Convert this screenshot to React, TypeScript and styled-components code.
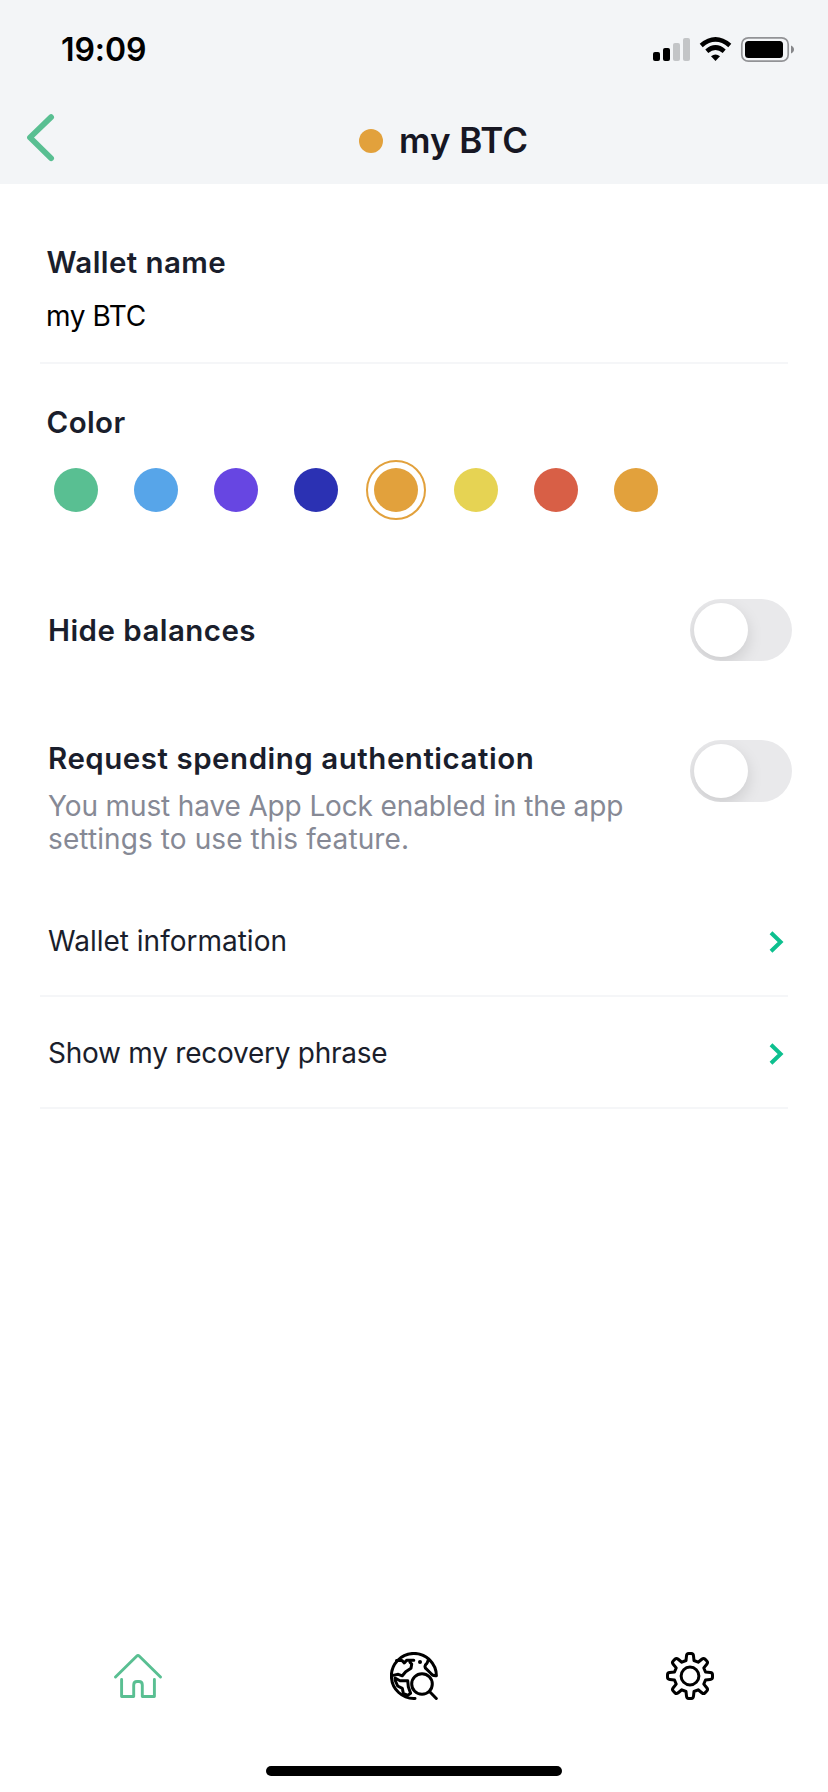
import React, { useState } from "react";
import styled, { createGlobalStyle } from "styled-components";

const GlobalStyle = createGlobalStyle`
  * { box-sizing: border-box; }
  body { margin: 0; background: #ffffff; }
  button { border: 0; padding: 0; margin: 0; background: none; font: inherit; color: inherit; }
`;

const Screen = styled.div`
  width: 828px;
  height: 1792px;
  display: flex;
  flex-direction: column;
  overflow: hidden;
  background: #ffffff;
  color: #1a1e2c;
  font-family: Inter, "Liberation Sans", sans-serif;
`;

const Header = styled.header`
  height: 184px;
  background: #f3f5f7;
`;

const StatusBar = styled.div`
  height: 100px;
  padding: 0 33px 0 61px;
  display: flex;
  align-items: center;
  justify-content: space-between;
`;

const Clock = styled.span`
  font-size: 32px;
  line-height: 40px;
  font-weight: 600;
  letter-spacing: -0.1px;
  color: #000000;
`;

const NavBar = styled.div`
  height: 84px;
  padding: 0 27px;
  display: grid;
  grid-template-columns: 60px 1fr 0;
  align-items: start;
`;

const BackButton = styled.button`
  width: 28px;
  height: 48px;
  margin-top: 14px;
  display: flex;
`;

const Title = styled.h1`
  margin: 20px 0 0;
  padding-left: 272px;
  display: flex;
  align-items: center;
  gap: 16px;
  font-size: 35px;
  line-height: 40px;
  font-weight: 560;
  letter-spacing: -0.05px;
  color: #171723;
`;

const TitleDot = styled.span`
  width: 24px;
  height: 24px;
  margin-top: 2px;
  border-radius: 50%;
  background: #e2a13c;
`;

const Content = styled.main`
  flex: 1;
  padding: 59px 36px 0 40px;
  display: flex;
  flex-direction: column;
`;

const Field = styled.section`
  height: 121px;
  margin-right: 4px;
  padding-left: 6.5px;
  border-bottom: 2px solid #f5f6f8;
`;

const Label = styled.h2<{ $spacing?: number }>`
  margin: 0;
  padding-bottom: 2px;
  font-size: 29.5px;
  line-height: 38px;
  font-weight: 590;
  letter-spacing: ${(p) => p.$spacing ?? 0.4}px;
  color: #1a1e2c;
`;

const FieldValue = styled.div`
  margin-top: 13px;
  margin-left: -0.5px;
  font-size: 28px;
  line-height: 40px;
  letter-spacing: -0.4px;
  color: #000000;
`;

const ColorSection = styled.section`
  margin-top: 39px;
  padding-left: 6.5px;
`;

const Swatches = styled.div`
  margin: 17px 0 0 -0.5px;
  display: flex;
  gap: 20px;
`;

const Swatch = styled.button<{ $color: string; $selected: boolean }>`
  width: 60px;
  height: 60px;
  border-radius: 50%;
  border: 2px solid ${(p) => (p.$selected ? p.$color : "transparent")};
  display: flex;
  align-items: center;
  justify-content: center;

  &::before {
    content: "";
    width: 44px;
    height: 44px;
    border-radius: 50%;
    background: ${(p) => p.$color};
  }
`;

const SettingRow = styled.section<{ $top: number }>`
  margin-top: ${(p) => p.$top}px;
  padding-left: 8px;
  display: flex;
  justify-content: space-between;
  align-items: flex-start;
`;

const SettingText = styled.div<{ $top: number }>`
  margin-top: ${(p) => p.$top}px;
`;

const Hint = styled.p`
  width: 600px;
  margin: 11px 0 0;
  font-size: 28px;
  line-height: 33px;
  color: #868995;
`;

const HintLine = styled.span<{ $spacing: number }>`
  display: block;
  letter-spacing: ${(p) => p.$spacing}px;
`;

const Track = styled.button<{ $on: boolean }>`
  width: 102px;
  height: 62px;
  padding: 4px;
  border-radius: 31px;
  overflow: hidden;
  display: flex;
  justify-content: ${(p) => (p.$on ? "flex-end" : "flex-start")};
  background: ${(p) => (p.$on ? "#59bf92" : "#e9e9eb")};
`;

const Knob = styled.span`
  width: 54px;
  height: 54px;
  border-radius: 50%;
  background: #ffffff;
  box-shadow: 0 6px 16px rgba(0, 0, 0, 0.13);
`;

const Links = styled.nav`
  margin: 29px 4px 0 0;
`;

const LinkRow = styled.button`
  width: 100%;
  height: 112px;
  padding: 1px 4px 0 8px;
  border-bottom: 2px solid #f5f6f8;
  display: flex;
  align-items: center;
  justify-content: space-between;
`;

const LinkText = styled.span<{ $spacing: number }>`
  font-size: 28px;
  line-height: 40px;
  letter-spacing: ${(p) => p.$spacing}px;
`;

const TabBar = styled.nav`
  height: 140px;
  display: grid;
  grid-template-columns: repeat(3, 276px);
`;

const Tab = styled.button`
  height: 48px;
  display: flex;
  justify-content: center;
`;

const HomeIndicator = styled.div`
  width: 296px;
  height: 10px;
  margin: -26px auto 16px;
  border-radius: 5px;
  background: #000000;
`;

const StatusIcons = () => (
  <svg width="142" height="28" viewBox="653 36 142 28" fill="none">
    <rect x="653" y="52" width="7" height="9" rx="2" fill="#000" />
    <rect x="663" y="48" width="7" height="13" rx="2" fill="#000" />
    <rect x="673" y="43" width="7" height="18" rx="2" fill="#c3c5c7" />
    <rect x="683" y="38" width="7" height="23" rx="2" fill="#c3c5c7" />
    <path d="M701.2 45.4Q715.5 33.2 729.8 45.4" stroke="#000" strokeWidth="4.6" />
    <path d="M706.8 51.2Q715.5 43.8 724.2 51.2" stroke="#000" strokeWidth="4.6" />
    <path d="M711 56.2Q715.5 53 720 56.2L715.5 61Z" fill="#000" />
    <rect x="741.8" y="37.8" width="46.4" height="23.4" rx="6.5" stroke="#929396" strokeWidth="1.7" />
    <rect x="745" y="41" width="38" height="17" rx="3.5" fill="#000" />
    <path d="M791 45.5C795 47 795 52 791 53.5Z" fill="#86878a" />
  </svg>
);

const BackIcon = () => (
  <svg width="28" height="48" viewBox="0 0 28 48" fill="none">
    <path d="M24.1 3.2L3 23.5L24.1 44.2" stroke="#59bf92" strokeWidth="5.8" strokeLinecap="round" strokeLinejoin="round" />
  </svg>
);

const Chevron = styled.svg`
  margin-top: 2px;
`;

const ChevronIcon = () => (
  <Chevron width="15" height="22" viewBox="0 0 15 22" fill="none">
    <path d="M2 1.8L11.6 11L2 20.2" stroke="#0dc08f" strokeWidth="4" />
  </Chevron>
);

const HomeIcon = () => (
  <svg width="48" height="48" viewBox="0 0 48 48" fill="none" stroke="#59bf92" strokeWidth="2.9" strokeLinecap="round" strokeLinejoin="round">
    <path d="M1.5 25L22.6 4.2Q24 2.9 25.4 4.2L46.5 25" />
    <path d="M7.6 27.5V44.5H19.7V33Q19.7 29.5 23 29.5H25Q28.3 29.5 28.3 33V44.5H40.4V27.5" />
  </svg>
);

const ExploreIcon = () => (
  <svg width="48" height="48" viewBox="0 0 48 48" fill="none" stroke="#000" strokeWidth="3" strokeLinecap="round" strokeLinejoin="round">
    <path d="M25 46.4A22.5 22.5 0 1 1 46.4 23.8Q42.5 24.2 40.5 21L35.5 16.2Q34 13.5 37 11.2L38.7 7" />
    <path d="M6.5 8.4H12L14.3 10.9L16.7 8.2H23.8M20 10.4L21.7 12L21 16.3L15.7 19.7L12.3 23.8L8.3 22.3L2 23.6" />
    <path d="M5 26L10 28.7H17.7L18.3 34.7L20.6 41.3L17.7 43.4L13.3 41.3L12.3 36.3L7.7 34L5 28" />
    <circle cx="30" cy="10" r="2" fill="#000" stroke="none" />
    <circle cx="32" cy="32" r="10.3" />
    <path d="M39.5 39.5L46.3 46.5" />
  </svg>
);

const TOOTH: [string, [number, number][]][] = [
  ["L", [[-4, -15.5]]],
  ["L", [[-3.5, -20.2]]],
  ["Q", [[-3.3, -22.5], [-1.3, -22.5]]],
  ["L", [[1.3, -22.5]]],
  ["Q", [[3.3, -22.5], [3.5, -20.2]]],
  ["L", [[4, -15.5]]],
];

const gearPath = Array.from({ length: 8 }, (_, i) => {
  const a = (i * Math.PI) / 4;
  return TOOTH.map(([cmd, pts], j) => {
    const coords = pts
      .map(([x, y]) => {
        const px = 24 + x * Math.cos(a) - y * Math.sin(a);
        const py = 24 + x * Math.sin(a) + y * Math.cos(a);
        return `${px.toFixed(2)} ${py.toFixed(2)}`;
      })
      .join(" ");
    return `${i === 0 && j === 0 ? "M" : cmd}${coords}`;
  }).join("");
}).join("") + "Z";

const SettingsIcon = () => (
  <svg width="48" height="48" viewBox="0 0 48 48" fill="none" stroke="#000" strokeWidth="3" strokeLinejoin="round">
    <path d={gearPath} />
    <circle cx="24" cy="24" r="8.9" />
  </svg>
);

const COLORS = ["#59bf92", "#57a5e9", "#6746e2", "#2b31b3", "#e2a13c", "#e6d353", "#d85f46", "#e2a13c"];

function Toggle({ label }: { label: string }) {
  const [on, setOn] = useState(false);
  return (
    <Track $on={on} role="switch" aria-checked={on} aria-label={label} onClick={() => setOn(!on)}>
      <Knob />
    </Track>
  );
}

export default function App() {
  const [selected, setSelected] = useState(4);
  return (
    <Screen>
      <GlobalStyle />
      <Header>
        <StatusBar>
          <Clock>19:09</Clock>
          <StatusIcons />
        </StatusBar>
        <NavBar>
          <BackButton aria-label="Back"><BackIcon /></BackButton>
          <Title><TitleDot />my BTC</Title>
        </NavBar>
      </Header>
      <Content>
        <Field>
          <Label>Wallet name</Label>
          <FieldValue>my BTC</FieldValue>
        </Field>
        <ColorSection>
          <Label>Color</Label>
          <Swatches>
            {COLORS.map((color, i) => (
              <Swatch key={i} $color={color} $selected={i === selected} aria-label={`Color ${i + 1}`} onClick={() => setSelected(i)} />
            ))}
          </Swatches>
        </ColorSection>
        <SettingRow $top={79}>
          <SettingText $top={12}>
            <Label $spacing={0.45}>Hide balances</Label>
          </SettingText>
          <Toggle label="Hide balances" />
        </SettingRow>
        <SettingRow $top={79}>
          <SettingText $top={-1}>
            <Label $spacing={0.52}>Request spending authentication</Label>
            <Hint>
              <HintLine $spacing={-0.13}>You must have App Lock enabled in the app</HintLine>
              <HintLine $spacing={0.1}>settings to use this feature.</HintLine>
            </Hint>
          </SettingText>
          <Toggle label="Request spending authentication" />
        </SettingRow>
        <Links>
          <LinkRow><LinkText $spacing={0}>Wallet information</LinkText><ChevronIcon /></LinkRow>
          <LinkRow><LinkText $spacing={-0.25}>Show my recovery phrase</LinkText><ChevronIcon /></LinkRow>
        </Links>
      </Content>
      <TabBar>
        <Tab aria-label="Home"><HomeIcon /></Tab>
        <Tab aria-label="Explore"><ExploreIcon /></Tab>
        <Tab aria-label="Settings"><SettingsIcon /></Tab>
      </TabBar>
      <HomeIndicator />
    </Screen>
  );
}
